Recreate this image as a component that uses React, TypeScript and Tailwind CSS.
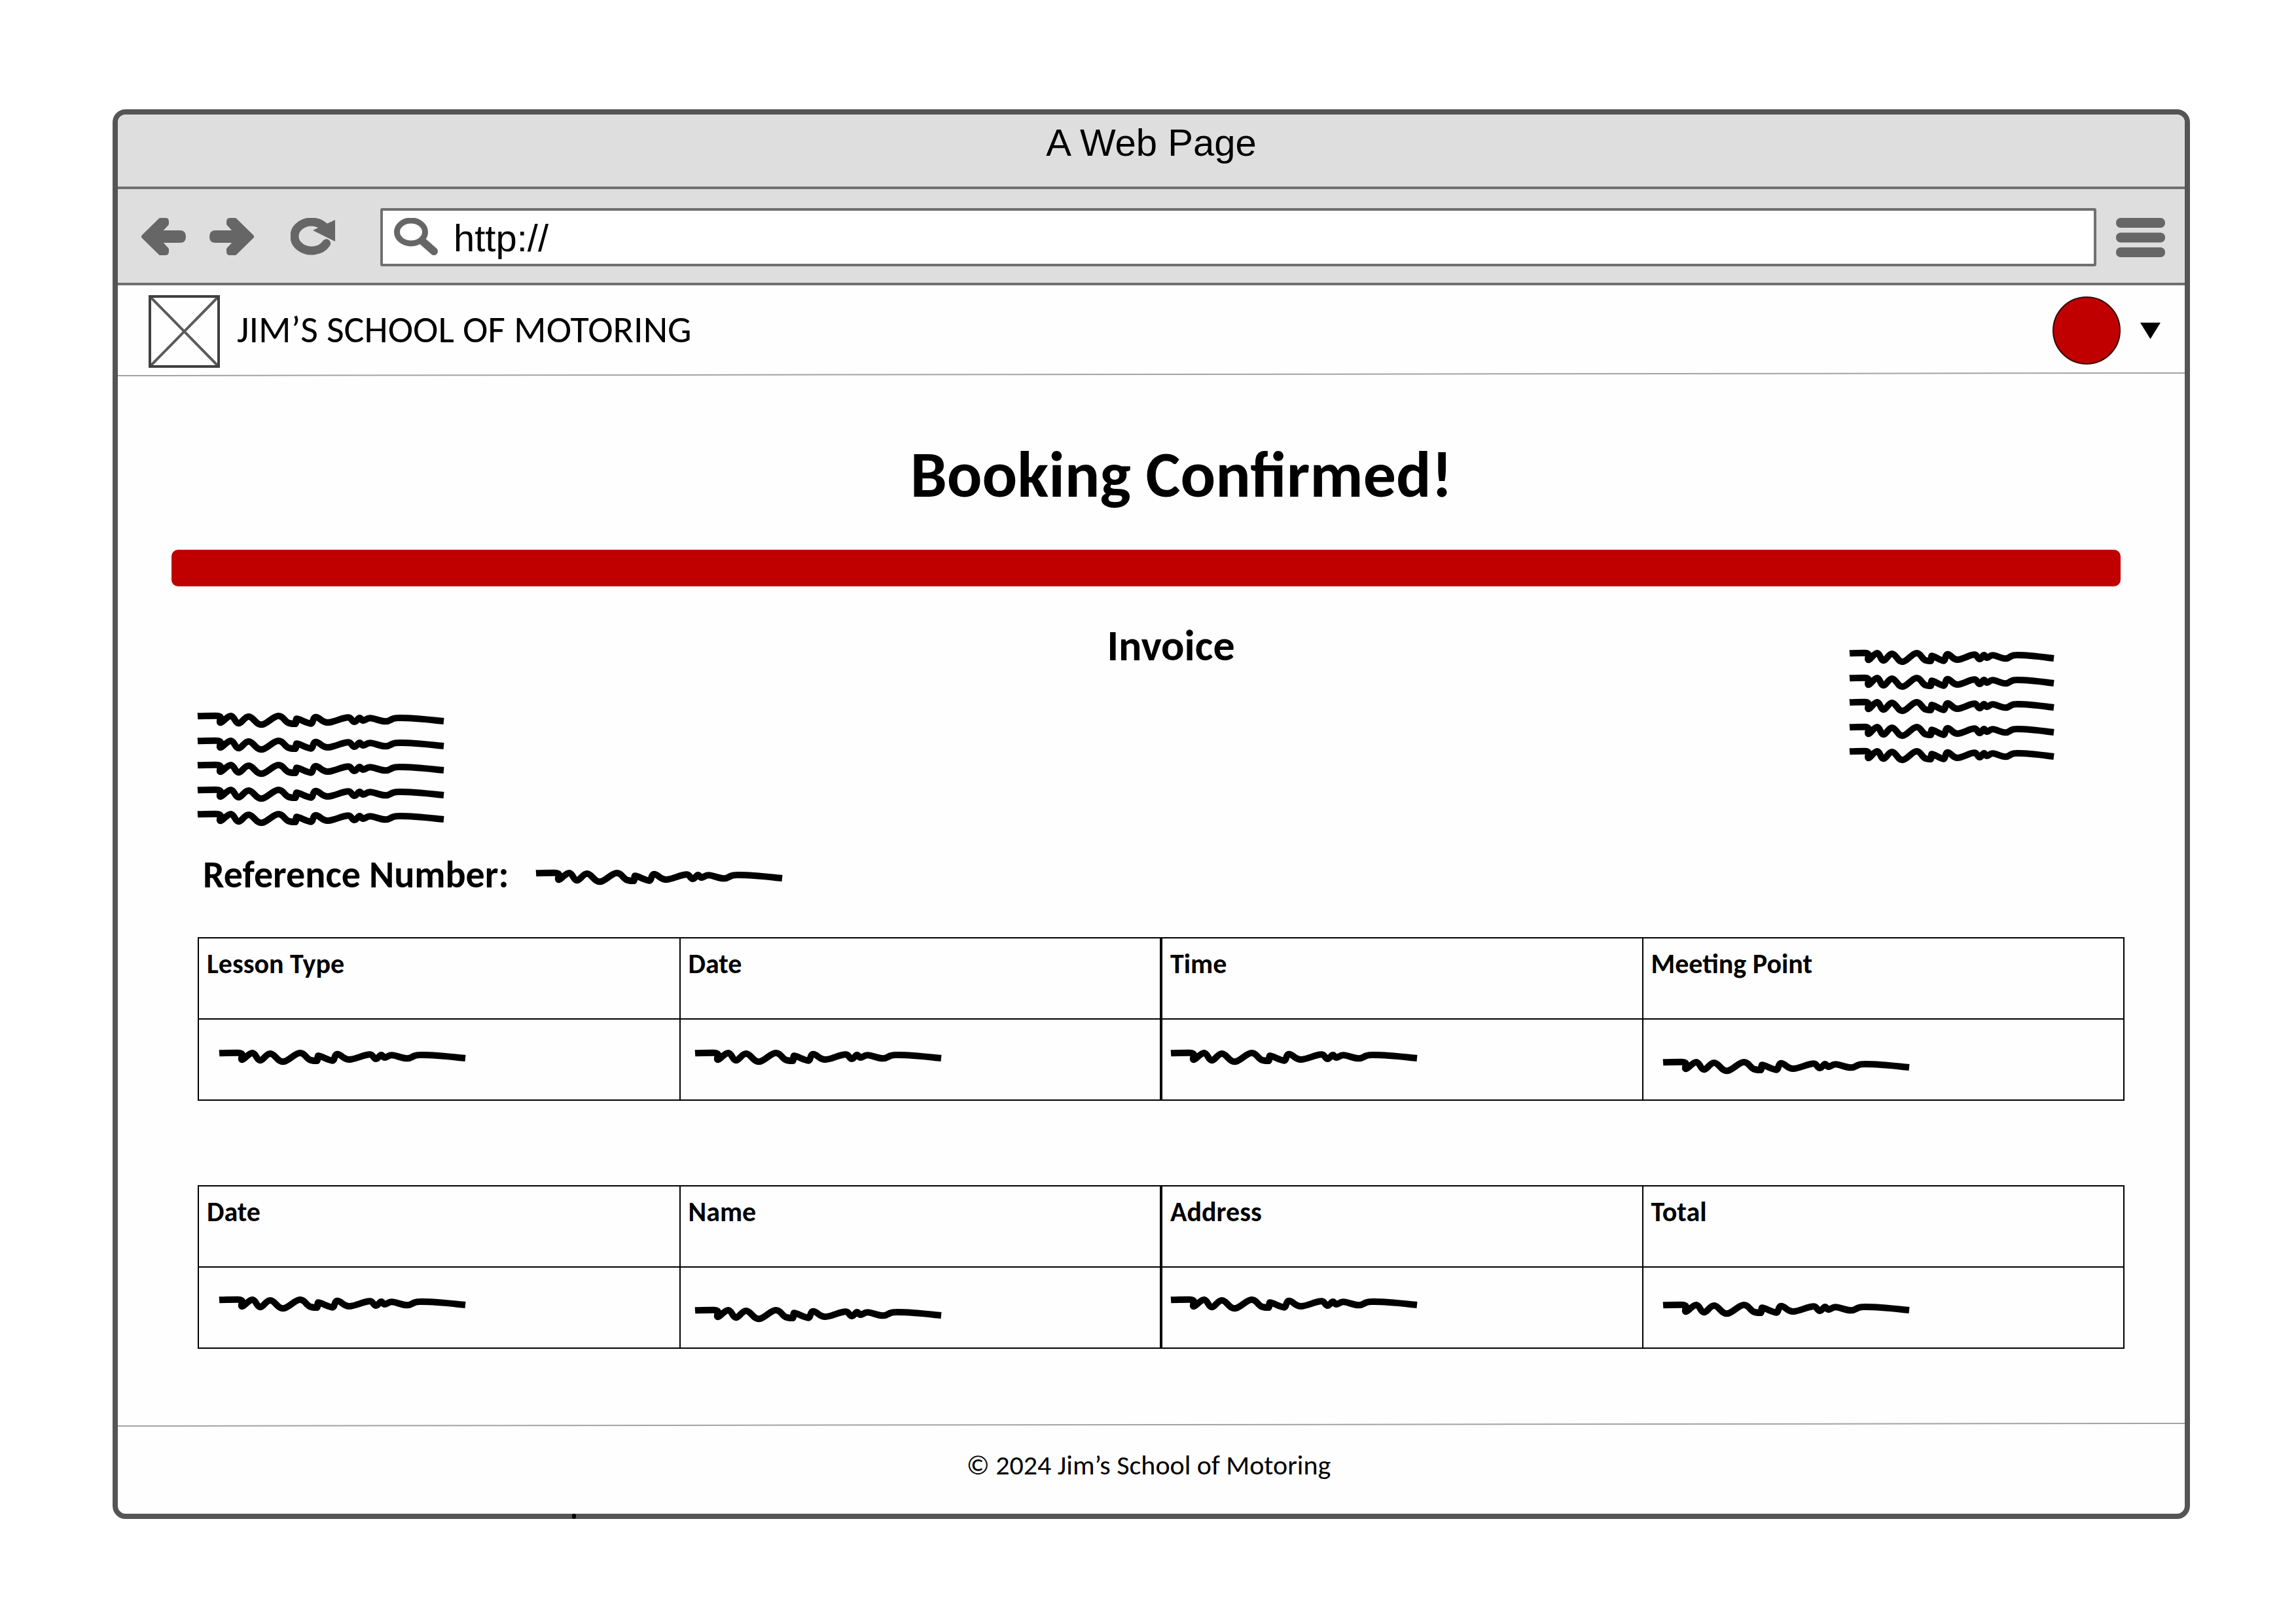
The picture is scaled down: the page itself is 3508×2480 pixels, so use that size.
import React from "react";

const SCRIBBLE =
  "M0 22 C30 20 60 20 84 20 C100 20 108 25 104 35 C101 46 100 52 105 52 " +
  "C117 50 136 20 153 21 C168 22 172 55 188 55 C202 55 215 24 234 24 " +
  "C256 24 266 61 291 61 C318 61 344 21 371 21 C395 21 398 48 420 54 " +
  "C434 57 444 58 449 57 C454 54 448 34 455 34 C468 34 500 55 520 56 " +
  "C532 55 526 26 542 26 C560 26 568 51 597 51 C625 51 665 27 692 28 " +
  "C706 29 708 48 719 48 C730 48 734 30 743 30 C750 30 750 42 759 42 " +
  "C768 42 775 31 791 31 C812 31 836 46 862 46 C886 46 884 30 920 30 " +
  "C985 28 1060 38 1129 45";

function Scribble({ className = "w-[376px]" }: { className?: string }) {
  return (
    <svg
      className={`block h-[27px] shrink-0 overflow-visible ${className}`}
      viewBox="0 0 1129 81"
      preserveAspectRatio="none"
      fill="none"
      stroke="#000"
      strokeWidth="10"
      strokeLinejoin="round"
      aria-hidden="true"
    >
      <path d={SCRIBBLE} vectorEffect="non-scaling-stroke" />
    </svg>
  );
}

function ScribbleBlock({ className, line }: { className: string; line: string }) {
  return (
    <div className={`flex h-[177px] shrink-0 flex-col justify-between ${className}`}>
      {[0, 1, 2, 3, 4].map((n) => (
        <Scribble key={n} className={line} />
      ))}
    </div>
  );
}

const ARROW =
  "M3 28.5 L29 3 H37 Q39 3 39 6 V9 L27 22 H59 Q65 22 65 28.5 Q65 35 59 35 H27 L39 48 V51 Q39 54 37 54 H29 Z";

function ArrowIcon({ flip = false }: { flip?: boolean }) {
  return (
    <svg
      className="block h-[60px] w-[68px]"
      viewBox="0 0 68 60"
      fill="#666"
      stroke="#666"
      strokeWidth="6"
      strokeLinejoin="round"
      aria-hidden="true"
    >
      <path d={ARROW} transform={flip ? "translate(68 0) scale(-1 1)" : undefined} />
    </svg>
  );
}

function ReloadIcon() {
  return (
    <svg className="block h-[60px] w-[68px]" viewBox="0 0 68 60" aria-hidden="true">
      <path
        d="M54 16.4 A26 22 0 1 0 54.6 38.8"
        fill="none"
        stroke="#666"
        strokeWidth="13"
        strokeLinecap="round"
      />
      <path d="M68 3 V36 L34 19 L46 13 Z" fill="#666" />
    </svg>
  );
}

function SearchIcon() {
  return (
    <svg
      className="block h-[60px] w-[68px] shrink-0"
      viewBox="0 0 68 60"
      fill="none"
      stroke="#666"
      aria-hidden="true"
    >
      <ellipse cx="26" cy="21.5" rx="21.5" ry="17.5" strokeWidth="9" />
      <path d="M44 36 L61 51" strokeWidth="12" strokeLinecap="round" />
    </svg>
  );
}

function MenuIcon() {
  return (
    <svg className="block h-[60px] w-[75px]" viewBox="0 0 75 60" fill="#666" aria-hidden="true">
      <rect width="75" height="15" rx="7" />
      <rect y="22.5" width="75" height="15" rx="7" />
      <rect y="45" width="75" height="15" rx="7" />
    </svg>
  );
}

/* Hand-ruled separator that rises slightly to the right. */
function SlantedRule() {
  return (
    <svg
      className="block h-[6px] w-full"
      viewBox="0 0 100 6"
      preserveAspectRatio="none"
      aria-hidden="true"
    >
      <path
        d="M0 5 L100 1"
        stroke="#a3a3a3"
        strokeWidth="2"
        vectorEffect="non-scaling-stroke"
      />
    </svg>
  );
}

type Column = { label: string; cell: string };

const lesson: Column[] = [
  { label: "Lesson Type", cell: "pl-[31px] pt-[44px]" },
  { label: "Date", cell: "pl-[22px] pt-[44px]" },
  { label: "Time", cell: "pl-[13px] pt-[44px]" },
  { label: "Meeting Point", cell: "pl-[30px] pt-[58px]" },
];

const billing: Column[] = [
  { label: "Date", cell: "pl-[31px] pt-[42px]" },
  { label: "Name", cell: "pl-[22px] pt-[58px]" },
  { label: "Address", cell: "pl-[13px] pt-[42px]" },
  { label: "Total", cell: "pl-[30px] pt-[50px]" },
];

function DetailsTable({ columns }: { columns: Column[] }) {
  return (
    <table className="w-full table-fixed border-collapse">
      <thead>
        <tr>
          {columns.map((c, i) => (
            <th
              key={c.label}
              scope="col"
              className={`h-[124px] border-2 border-black pl-[12px] pt-[14px] text-left align-top text-[42px] leading-[50px] font-bold ${
                i === 2 ? "border-l-4" : ""
              }`}
            >
              {c.label}
            </th>
          ))}
        </tr>
      </thead>
      <tbody>
        <tr>
          {columns.map((c, i) => (
            <td
              key={c.label}
              className={`h-[124px] border-2 border-black align-top ${c.cell} ${
                i === 2 ? "border-l-4" : ""
              }`}
            >
              <Scribble />
            </td>
          ))}
        </tr>
      </tbody>
    </table>
  );
}

export default function App() {
  return (
    <div className="bg-white pt-[167px] pr-[162px] pb-[160px] pl-[172px] font-[Carlito,Calibri,Lato,sans-serif] text-black">
      <div className="relative rounded-[20px] border-8 border-[#555] bg-[#fefefe]">
        <div className="rounded-t-[12px] border-b-4 border-[#707070] bg-[#dedede] pt-[11px] pb-[35px] text-center font-['Liberation_Sans',Arial,sans-serif] text-[58px] leading-[64px]">
          A Web Page
        </div>

        <div className="flex items-center border-b-4 border-[#707070] bg-[#dedede] pt-[29px] pr-[30px] pb-[25px] pl-[36px]">
          <button type="button" aria-label="Back">
            <ArrowIcon />
          </button>
          <button type="button" aria-label="Forward" className="ml-[36px]">
            <ArrowIcon flip />
          </button>
          <button type="button" aria-label="Reload" className="ml-[56px]">
            <ReloadIcon />
          </button>
          <label className="mr-[30px] ml-[69px] flex h-[89px] flex-1 items-center gap-[23px] rounded-[3px] border-4 border-[#707070] bg-white pl-[17px]">
            <SearchIcon />
            <input
              type="text"
              aria-label="Address"
              defaultValue="http://"
              className="min-w-0 flex-1 bg-transparent pt-[3px] font-['Liberation_Sans',Arial,sans-serif] text-[58px] leading-[64px] outline-none"
            />
          </label>
          <button type="button" aria-label="Menu">
            <MenuIcon />
          </button>
        </div>

        <header className="flex items-center justify-between pt-[15px] pr-[37px] pb-[7px] pl-[47px]">
          <div className="flex items-center gap-[26px]">
            <svg
              className="block h-[111px] w-[109px]"
              viewBox="0 0 109 111"
              fill="none"
              aria-hidden="true"
            >
              <path d="M4 4 L105 107 M105 4 L4 107" stroke="#5a5a5a" strokeWidth="4" />
              <rect x="2" y="2" width="105" height="107" stroke="#404040" strokeWidth="4" />
            </svg>
            <span className="pb-[6px] text-[58px] leading-[70px]">JIM’S SCHOOL OF MOTORING</span>
          </div>
          <button type="button" aria-label="Account" className="flex items-center gap-[30px] pb-[3px]">
            <span className="block size-[104px] rounded-full border-2 border-[#3a0505] bg-[#c00000]" />
            <svg className="block h-[25px] w-[31px]" viewBox="0 0 31 25" aria-hidden="true">
              <path d="M0 0 H31 L15.5 25 Z" />
            </svg>
          </button>
        </header>

        <SlantedRule />

        <main>
          <div className="pr-[98px] pl-[82px]">
            <h1 className="mt-[90px] pl-[108px] text-center text-[100px] leading-[120px] font-bold">
              Booking Confirmed!
            </h1>
            <div className="mt-[55px] h-[56px] rounded-[10px] bg-[#c00000]" />

            <div className="flex items-start">
              <ScribbleBlock className="mt-[191px] ml-[40px]" line="w-[376px]" />
              <h2 className="mt-[51px] flex-1 pl-[74px] text-center text-[66px] leading-[80px] font-bold">
                Invoice
              </h2>
              <ScribbleBlock className="mt-[95px] mr-[102px]" line="w-[312px]" />
            </div>

            <div className="mt-[38px] ml-[48px] flex items-center gap-[42px]">
              <span className="text-[58px] leading-[70px] font-bold">Reference Number:</span>
              <Scribble className="mt-[6px] w-[376px]" />
            </div>
          </div>

          <div className="mt-[60px] flex flex-col gap-[129px] pr-[92px] pl-[122px]">
            <DetailsTable columns={lesson} />
            <DetailsTable columns={billing} />
          </div>
        </main>

        <footer className="mt-[113px]">
          <SlantedRule />
          <p className="pt-[34px] pr-[8px] pb-[49px] text-center text-[42px] leading-[50px]">
            © 2024 Jim’s School of Motoring
          </p>
        </footer>

        <span className="absolute -bottom-2 left-[694px] h-2 w-1.5 rounded-sm bg-black" />
      </div>
    </div>
  );
}
